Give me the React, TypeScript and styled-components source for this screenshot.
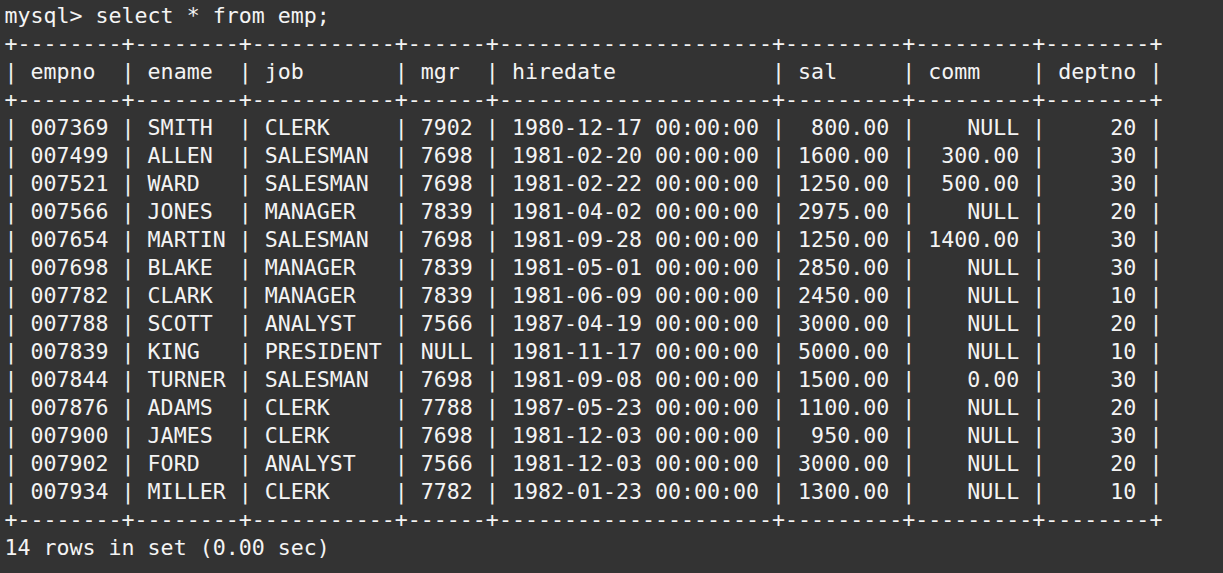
import styled, { createGlobalStyle } from "styled-components";

const GlobalStyle = createGlobalStyle`
  html, body {
    margin: 0;
    padding: 0;
    background: #333333;
  }
`;

const Terminal = styled.div`
  width: 1223px;
  height: 573px;
  box-sizing: border-box;
  padding: 2px 0 0 4.5px;
  background: #333333;
  color: #f4f4f4;
  font-family: "DejaVu Sans Mono", "Liberation Mono", monospace;
  font-size: 21.61px;
  overflow: hidden;
`;

const Line = styled.div`
  height: 28px;
  line-height: 28px;
  white-space: pre;
`;

type Col = { name: string; width: number; right?: boolean };

const cols: Col[] = [
  { name: "empno", width: 6 },
  { name: "ename", width: 6 },
  { name: "job", width: 9 },
  { name: "mgr", width: 4, right: true },
  { name: "hiredate", width: 19 },
  { name: "sal", width: 7, right: true },
  { name: "comm", width: 7, right: true },
  { name: "deptno", width: 6, right: true },
];

const rows: string[][] = [
  ["007369", "SMITH", "CLERK", "7902", "1980-12-17 00:00:00", "800.00", "NULL", "20"],
  ["007499", "ALLEN", "SALESMAN", "7698", "1981-02-20 00:00:00", "1600.00", "300.00", "30"],
  ["007521", "WARD", "SALESMAN", "7698", "1981-02-22 00:00:00", "1250.00", "500.00", "30"],
  ["007566", "JONES", "MANAGER", "7839", "1981-04-02 00:00:00", "2975.00", "NULL", "20"],
  ["007654", "MARTIN", "SALESMAN", "7698", "1981-09-28 00:00:00", "1250.00", "1400.00", "30"],
  ["007698", "BLAKE", "MANAGER", "7839", "1981-05-01 00:00:00", "2850.00", "NULL", "30"],
  ["007782", "CLARK", "MANAGER", "7839", "1981-06-09 00:00:00", "2450.00", "NULL", "10"],
  ["007788", "SCOTT", "ANALYST", "7566", "1987-04-19 00:00:00", "3000.00", "NULL", "20"],
  ["007839", "KING", "PRESIDENT", "NULL", "1981-11-17 00:00:00", "5000.00", "NULL", "10"],
  ["007844", "TURNER", "SALESMAN", "7698", "1981-09-08 00:00:00", "1500.00", "0.00", "30"],
  ["007876", "ADAMS", "CLERK", "7788", "1987-05-23 00:00:00", "1100.00", "NULL", "20"],
  ["007900", "JAMES", "CLERK", "7698", "1981-12-03 00:00:00", "950.00", "NULL", "30"],
  ["007902", "FORD", "ANALYST", "7566", "1981-12-03 00:00:00", "3000.00", "NULL", "20"],
  ["007934", "MILLER", "CLERK", "7782", "1982-01-23 00:00:00", "1300.00", "NULL", "10"],
];

const border = "+" + cols.map((c) => "-".repeat(c.width + 2)).join("+") + "+";

const fmt = (cells: string[], header = false) =>
  "|" +
  cells
    .map((v, i) => {
      const c = cols[i];
      const s = !header && c.right ? v.padStart(c.width) : v.padEnd(c.width);
      return " " + s + " ";
    })
    .join("|") +
  "|";

export default function App() {
  return (
    <>
      <GlobalStyle />
      <Terminal>
        <Line>mysql&gt; select * from emp;</Line>
        <Line>{border}</Line>
        <Line>{fmt(cols.map((c) => c.name), true)}</Line>
        <Line>{border}</Line>
        {rows.map((r) => (
          <Line key={r[0]}>{fmt(r)}</Line>
        ))}
        <Line>{border}</Line>
        <Line>14 rows in set (0.00 sec)</Line>
      </Terminal>
    </>
  );
}
